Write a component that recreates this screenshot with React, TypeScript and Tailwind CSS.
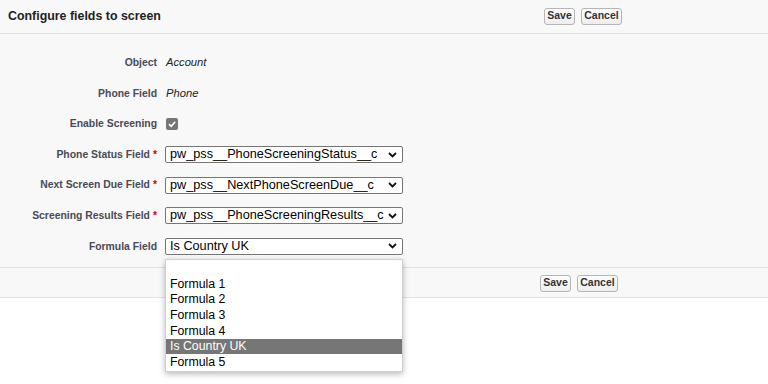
import React from "react";

const F = { fontFamily: '"Liberation Sans", Arial, sans-serif' };

function Btn({ label, w }: { label: string; w: string }) {
  return (
    <div
      className={`${w} h-[17px] flex items-center justify-center rounded-[3px] border border-[#b5b5b5] bg-gradient-to-b from-white to-[#ededed] text-[10.5px] font-bold text-[#333]`}
    >
      {label}
    </div>
  );
}

function Chevron() {
  return (
    <svg width="9" height="6" viewBox="0 0 9 6" className="shrink-0">
      <path d="M1 1 L4.5 4.5 L8 1" fill="none" stroke="#111" strokeWidth="1.8" />
    </svg>
  );
}

function Select({ value }: { value: string }) {
  return (
    <div className="w-[238px] h-[17px] flex items-center justify-between pl-[4px] pr-[5px] border border-[#767676] rounded-[2px] bg-white text-[12.7px] text-black">
      <span className="whitespace-nowrap overflow-hidden">{value}</span>
      <Chevron />
    </div>
  );
}

function Row({ label, required, children }: { label: string; required?: boolean; children: React.ReactNode }) {
  return (
    <div className="flex items-center h-[30.6px]">
      <div className="w-[157px] text-right text-[10.4px] font-bold text-[#4a4a56] whitespace-nowrap">
        {label}
        {required && <span className="text-[#c00] ml-[3px]">*</span>}
      </div>
      <div className="ml-[8px] flex items-center">{children}</div>
    </div>
  );
}

export default function App() {
  const options = ["", "Formula 1", "Formula 2", "Formula 3", "Formula 4", "Is Country UK", "Formula 5"];
  return (
    <div style={F} className="relative w-[768px] h-[384px] bg-white overflow-hidden">
      <div className="h-[34px] bg-[#f8f8f8] border-b border-[#e3e3e3] flex items-center">
        <div className="w-[544px] pl-[8px] text-[12.4px] font-bold text-[#222]">Configure fields to screen</div>
        <div className="flex gap-[6px] -mt-[1px]">
          <Btn label="Save" w="w-[31px]" />
          <Btn label="Cancel" w="w-[41px]" />
        </div>
      </div>
      <div className="bg-[#f8f8f8] pt-[13.5px] h-[233px]">
        <Row label="Object">
          <span className="italic text-[11.2px] text-[#222] ml-[1px]">Account</span>
        </Row>
        <Row label="Phone Field">
          <span className="italic text-[11.2px] text-[#222] ml-[1px]">Phone</span>
        </Row>
        <Row label="Enable Screening">
          <div className="w-[12px] h-[12px] rounded-[2px] bg-[#767676] flex items-center justify-center ml-[1px]">
            <svg width="10" height="10" viewBox="0 0 10 10">
              <path d="M2 5.2 L4.2 7.3 L8.2 2.8" fill="none" stroke="white" strokeWidth="1.6" />
            </svg>
          </div>
        </Row>
        <Row label="Phone Status Field" required>
          <Select value="pw_pss__PhoneScreeningStatus__c" />
        </Row>
        <Row label="Next Screen Due Field" required>
          <Select value="pw_pss__NextPhoneScreenDue__c" />
        </Row>
        <Row label="Screening Results Field" required>
          <Select value="pw_pss__PhoneScreeningResults__c" />
        </Row>
        <Row label="Formula Field">
          <Select value="Is Country UK" />
        </Row>
      </div>
      <div className="h-[31px] bg-[#f8f8f8] border-t border-b border-[#e3e3e3] flex items-center pl-[540px]">
        <div className="flex gap-[6px] mt-[1px]">
          <Btn label="Save" w="w-[31px]" />
          <Btn label="Cancel" w="w-[41px]" />
        </div>
      </div>
      <div className="absolute left-[165px] top-[259px] w-[238px] bg-white border border-[#d0d0d0] shadow-[0_2px_6px_rgba(0,0,0,0.28)] py-[0.5px]">
        {options.map((o, i) => (
          <div
            key={i}
            className={`h-[15.67px] flex items-center pl-[4px] text-[12.3px] leading-none ${
              o === "Is Country UK" ? "bg-[#767676] text-white" : "text-black"
            }`}
          >
            {o}
          </div>
        ))}
      </div>
    </div>
  );
}
